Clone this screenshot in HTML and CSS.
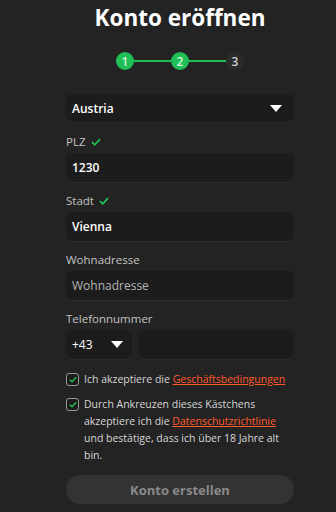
FILE: index.html
```html
<!DOCTYPE html>
<html lang="de">
<head>
    <meta charset="UTF-8">
    <meta name="viewport" content="width=device-width, initial-scale=1.0">
    <title>Konto eröffnen</title>
    <link rel="stylesheet" href="styles.css">
</head>
<body>
    <div class="page">
        <h1>Konto eröffnen</h1>

        <!-- Steps -->
        <div class="steps">
            <div class="step done">1</div>
            <div class="step-line"></div>
            <div class="step done">2</div>
            <div class="step-line"></div>
            <div class="step">3</div>
        </div>

        <div class="box select">
            <span class="value">Austria</span>
            <span class="caret"></span>
        </div>

        <div class="field">
            <div class="label">PLZ <svg class="ok" viewBox="0 0 10 8"><path d="M1 4.2 L3.8 6.8 L9 1.2"/></svg></div>
            <div class="box"><span class="value">1230</span></div>
        </div>

        <div class="field">
            <div class="label">Stadt <svg class="ok" viewBox="0 0 10 8"><path d="M1 4.2 L3.8 6.8 L9 1.2"/></svg></div>
            <div class="box"><span class="value">Vienna</span></div>
        </div>

        <div class="field">
            <div class="label">Wohnadresse</div>
            <div class="box"><span class="placeholder">Wohnadresse</span></div>
        </div>

        <div class="field">
            <div class="label">Telefonnummer</div>
            <div class="phone">
                <div class="box prefix">
                    <span class="value light">+43</span>
                    <span class="caret"></span>
                </div>
                <div class="box number"></div>
            </div>
        </div>

        <!-- Checkboxes -->
        <div class="check first">
            <span class="checkbox"><svg viewBox="0 0 10 8"><path d="M1 4.2 L3.8 6.8 L9 1.2"/></svg></span>
            <p>Ich akzeptiere die <a href="#">Geschäftsbedingungen</a></p>
        </div>
        <div class="check">
            <span class="checkbox"><svg viewBox="0 0 10 8"><path d="M1 4.2 L3.8 6.8 L9 1.2"/></svg></span>
            <p>Durch Ankreuzen dieses Kästchens akzeptiere ich die <a href="#">Datenschutzrichtlinie</a> und bestätige, dass ich über 18 Jahre alt bin.</p>
        </div>

        <button class="submit">Konto erstellen</button>
    </div>
</body>
</html>
```

FILE: styles.css
```css
* {
    margin: 0;
    padding: 0;
    box-sizing: border-box;
}

body {
    background-color: #232323;
    font-family: 'Open Sans', 'Liberation Sans', sans-serif;
    color: #fff;
}

.page {
    width: 228px;
    margin-left: 66px;
    padding-top: 3px;
}

h1 {
    font-size: 22.5px;
    line-height: 30px;
    font-weight: 700;
    text-align: center;
}

/* Steps */
.steps {
    display: flex;
    justify-content: center;
    align-items: center;
    margin-top: 19px;
}

.step {
    width: 18px;
    height: 18px;
    border-radius: 50%;
    background-color: #2b2b2b;
    color: #cfcfcf;
    font-size: 12px;
    font-weight: 600;
    display: flex;
    justify-content: center;
    align-items: center;
}

.step.done {
    background-color: #1fbf55;
    color: #d7f3df;
}

.step-line {
    width: 37px;
    height: 2px;
    background-color: #1fbf55;
}

/* Inputs */
.box {
    height: 29px;
    background-color: #1c1c1c;
    border-radius: 6px;
    display: flex;
    align-items: center;
    padding: 0 6px;
    font-size: 12px;
    box-shadow: 0 1px 0 #2c2c2c;
}

.select {
    margin-top: 24px;
    height: 28px;
    justify-content: space-between;
    padding-right: 12px;
}

.value {
    font-weight: 600;
    color: #fff;
}

.value.light {
    font-weight: 400;
}

.placeholder {
    color: #b4b4b4;
}

.caret {
    width: 0;
    height: 0;
    border-left: 6px solid transparent;
    border-right: 6px solid transparent;
    border-top: 7px solid #fff;
}

.field {
    margin-top: 12px;
}

.field + .field {
    margin-top: 11px;
}

.label {
    font-size: 11.5px;
    line-height: 16px;
    color: #c2c2c2;
    margin-bottom: 3px;
}

.ok {
    width: 10px;
    height: 8px;
    margin-left: 2px;
}

.ok path,
.checkbox path {
    fill: none;
    stroke: #1fbf55;
    stroke-width: 1.8;
}

.phone {
    display: flex;
    gap: 6px;
}

.prefix {
    width: 66px;
    justify-content: space-between;
    padding-right: 9px;
}

.number {
    flex: 1;
}

/* Checkboxes */
.check {
    display: flex;
    align-items: flex-start;
    gap: 5px;
    margin-top: 8px;
}

.check.first {
    margin-top: 12px;
}

.checkbox {
    flex: none;
    width: 13px;
    height: 13px;
    margin-top: 2px;
    border: 1px solid #9a9a9a;
    border-radius: 3px;
    background-color: #1c1c1c;
    display: flex;
    justify-content: center;
    align-items: center;
}

.checkbox svg {
    width: 8px;
    height: 7px;
}

.check p {
    font-size: 10.5px;
    line-height: 17px;
    color: #d6d6d6;
}

.check a {
    color: #ff5a2a;
}

.submit {
    display: block;
    width: 100%;
    height: 29px;
    margin-top: 11px;
    border: none;
    border-radius: 15px;
    background-color: #333;
    color: #8a8a8a;
    font-family: 'Open Sans', 'Liberation Sans', sans-serif;
    font-size: 13px;
    font-weight: 700;
}
```
